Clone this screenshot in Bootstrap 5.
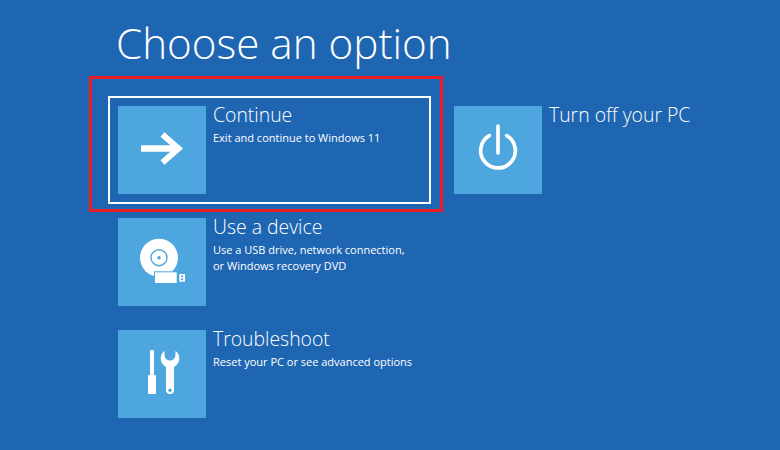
<!DOCTYPE html>
<html lang="en">
<head>
  <meta charset="UTF-8" />
  <title>Choose an option</title>
  <link href="https://cdn.jsdelivr.net/npm/bootstrap@5.3.5/dist/css/bootstrap.min.css" rel="stylesheet" />
  <script src="https://cdn.jsdelivr.net/npm/bootstrap@5.3.5/dist/js/bootstrap.bundle.min.js" defer></script>
  <style>
    html, body { height: 100%; overflow: hidden; }
    body {
      background: #1f66b2;
      color: #fff;
      font-family: "Open Sans", "Liberation Sans", sans-serif;
    }
    .screen { position: relative; padding: 17px 0 0 118px; width: 780px; height: 450px; }
    .screen-title { font-size: 42.2px; font-weight: 300; line-height: 52px; margin: 0 0 37px -2px; }
    .tile-row { height: 88px; }
    .tile-wide { width: 336px; flex: none; }
    .tile-list { margin-top: 24px; gap: 24px; }
    .tile-icon { width: 88px; height: 88px; background: #4ea6de; flex: none; }
    .tile-name { font-size: 19.4px; font-weight: 300; line-height: 24px; margin-top: -3px; }
    .tile-desc { font-size: 11px; line-height: 16px; margin-top: 3px; }
    .tile-text { padding-left: 7px; }
    .focus-box { position: absolute; left: 108px; top: 96px; width: 323px; height: 108px; border: 2px solid #fff; }
    .red-box { position: absolute; left: 89px; top: 76px; width: 354px; height: 136px; border: 3px solid #ee1c25; }
  </style>
</head>
<body>
  <div class="screen">
    <h1 class="screen-title">Choose an option</h1>
    <div class="d-flex">
      <div class="d-flex tile-row tile-wide">
        <div class="tile-icon">
          <svg width="88" height="88" viewBox="0 0 88 88" fill="none" stroke="#fff">
            <path d="M23 42.5h38" stroke-width="6.5"/>
            <path d="M44.5 28.5l16 14-16 14" stroke-width="6"/>
          </svg>
        </div>
        <div class="tile-text">
          <div class="tile-name">Continue</div>
          <div class="tile-desc">Exit and continue to Windows 11</div>
        </div>
      </div>
      <div class="d-flex tile-row">
        <div class="tile-icon">
          <svg width="88" height="88" viewBox="0 0 88 88" fill="none" stroke="#fff" stroke-width="3.7" stroke-linecap="round">
            <path d="M35.3 29.7a17.3 17.3 0 1 0 17.4 0M44 20v27"/>
          </svg>
        </div>
        <div class="tile-text"><div class="tile-name">Turn off your PC</div></div>
      </div>
    </div>
    <div class="d-flex flex-column tile-list">
      <div class="d-flex tile-row">
        <div class="tile-icon">
          <svg width="88" height="88" viewBox="0 0 88 88">
            <circle cx="41" cy="39.7" r="19" fill="#fff"/>
            <circle cx="41" cy="39.7" r="8" fill="none" stroke="#4ea6de" stroke-width="1.4"/>
            <circle cx="41" cy="39.7" r="1.8" fill="#4ea6de"/>
            <rect x="37" y="54.3" width="21.7" height="10.7" fill="#fff" stroke="#4ea6de" stroke-width="2" paint-order="stroke"/>
            <rect x="61.3" y="56" width="5.7" height="7.7" fill="#fff"/>
            <rect x="63" y="57.5" width="2.2" height="1.6" fill="#4ea6de"/>
            <rect x="63" y="60.5" width="2.2" height="1.6" fill="#4ea6de"/>
          </svg>
        </div>
        <div class="tile-text">
          <div class="tile-name">Use a device</div>
          <div class="tile-desc">Use a USB drive, network connection,<br>or Windows recovery DVD</div>
        </div>
      </div>
      <div class="d-flex tile-row">
        <div class="tile-icon">
          <svg width="88" height="88" viewBox="0 0 88 88" fill="#fff">
            <rect x="32" y="20" width="4" height="25" rx="1"/>
            <rect x="30" y="45" width="8" height="19" rx="1"/>
            <path d="M46.5 20.8A9.6 9.6 0 0 0 48 37V60A4 4 0 0 0 56 60V37A9.6 9.6 0 0 0 57.5 20.8V25A5.5 5.5 0 0 1 46.5 25Z"/>
            <circle cx="52" cy="60.3" r="1.7" fill="#4ea6de"/>
          </svg>
        </div>
        <div class="tile-text">
          <div class="tile-name">Troubleshoot</div>
          <div class="tile-desc">Reset your PC or see advanced options</div>
        </div>
      </div>
    </div>
    <div class="focus-box"></div>
    <div class="red-box"></div>
  </div>
</body>
</html>
